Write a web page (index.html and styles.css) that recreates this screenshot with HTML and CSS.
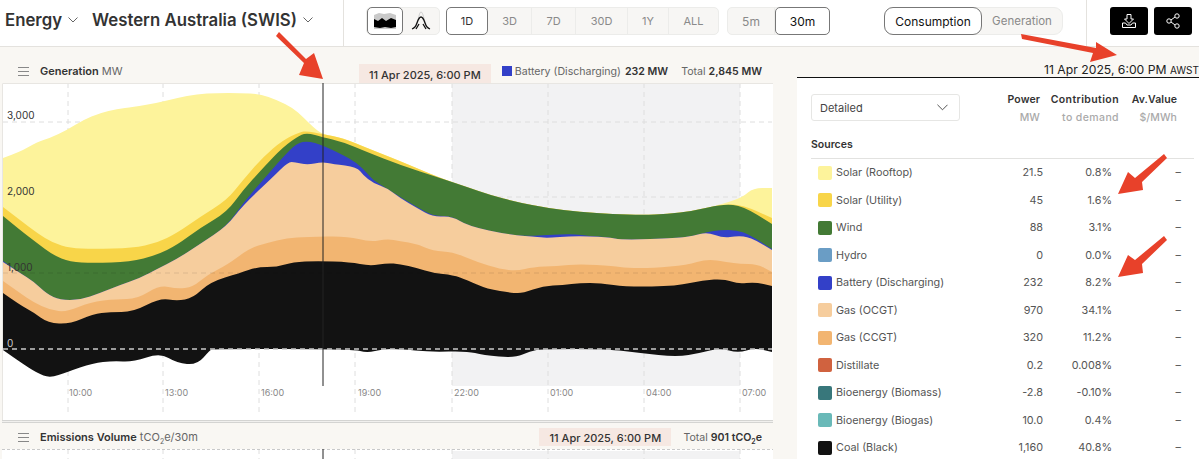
FILE: index.html
```html
<!DOCTYPE html>
<html lang="en">
<head>
<meta charset="utf-8">
<title>Energy - Western Australia (SWIS)</title>
<link rel="stylesheet" href="styles.css">
</head>
<body>
<header class="topbar">
  <div class="region">
    <span class="title t-energy">Energy</span>
    <svg class="chev c-energy" viewBox="0 0 10 6"><path d="M.5.5 5 5 9.500.5"/></svg>
    <span class="title t-region">Western Australia (SWIS)</span>
    <svg class="chev" viewBox="0 0 10 6"><path d="M.5.5 5 5 9.500.5"/></svg>
  </div>
  <div class="controls">
    <div class="group g-view">
      <button class="btn b-view active"><svg width="22" height="16" viewBox="0 0 22 16"><path fill="#c9c9c9" d="M0 2 5 0l5 1 6-1 6 2v14H0z"/><path fill="#000" d="M0 6l4 2 4-3 4 3 5-3 5 2v7l-5 1-6-1-5 1-6-1z"/></svg></button>
      <button class="btn b-view"><svg width="20" height="20" viewBox="0 0 20 20" fill="none"><path stroke="#ccc" d="M5 13C8 9 8 1 10 1s3 8 5 12"/><path stroke="#111" stroke-width="1.300" d="M1 18c3-1 4-3 5-6 1-3 2-6 4-6s3 3 4 6c1 3 2 5 5 6M5 18l3-5M15 18l-3-5"/></svg></button>
    </div>
    <div class="group g-range">
      <button class="btn b-1d active">1D</button>
      <button class="btn b-3d">3D</button>
      <button class="btn b-7d">7D</button>
      <button class="btn b-30d">30D</button>
      <button class="btn b-1y">1Y</button>
      <button class="btn b-all">ALL</button>
    </div>
    <div class="group g-int">
      <button class="btn b-5m">5m</button>
      <button class="btn b-30m active dark">30m</button>
    </div>
  </div>
  <div class="group g-mode">
    <button class="btn b-cons active dark">Consumption</button>
    <button class="btn b-gen">Generation</button>
  </div>
  <div class="actions">
    <button class="act"><svg width="16" height="16" viewBox="0 0 16 16" fill="none" stroke="#fff" stroke-width="1"><path d="M6 1.500h4V6h2.500L8 10.500 3.500 6H6zM1.500 10v4.500h13V10M1.500 10h3l1.500 2h4l1.500-2h3"/></svg></button>
    <button class="act"><svg width="14" height="16" viewBox="0 0 14 16" fill="none" stroke="#fff" stroke-width="1"><circle cx="3" cy="8" r="2.200"/><circle cx="11" cy="3" r="2.200"/><circle cx="11" cy="13" r="2.200"/><path d="M5 7l4-3M5 9l4 3"/></svg></button>
  </div>
</header>

<main class="content">
  <section class="charts">
    <div class="chart-head h-gen">
      <svg class="menu" width="11" height="9" viewBox="0 0 11 9"><path d="M0 .5h11M0 4.500h11M0 8.500h11"/></svg>
      <span class="ch-title"><b>Generation</b> MW</span>
      <span class="date-chip">11 Apr 2025, 6:00 PM</span>
      <span class="legend"><i class="sw-small"></i>Battery (Discharging) <b>232 MW</b></span>
      <span class="total">Total <b>2,845 MW</b></span>
    </div>
    <svg class="plot" width="771" height="337" viewBox="2 83 771 337">
      <rect x="2" y="83" width="771" height="337" fill="#fff"/>
      <rect x="452" y="83" width="288" height="303" fill="#f2f2f3"/>
      <g class="grid">
        <path d="M68 83V415M163 83V415M259 83V415M355 83V415M452 83V415M548 83V415M644 83V415M740 83V415"/>
        <path d="M3 122H772M3 197H772M3 273H772"/>
      </g>
      <path class="frame" d="M2.500 420V83.500H773"/>
      <path class="area" fill="#fdf39b" d="M3 158 20 152 37 142 50 138 67 130 83 120 100 113 117 109 133 107 157 103 177 98 197 94 217 93 240 93 260 94 277 100 293 108 303 117 313 127 322 134 343 138 367 148 400 161 440 178 467 187 490 195 517 202 547 208 580 212 613 214 643 215 667 214 693 211 723 204 743 197 753 188 772 188V349H3Z"/>
      <path class="area" fill="#f8d549" d="M3 207 20 220 37 233 53 243 70 248 93 249 133 248 157 243 177 233 200 217 227 200 243 180 263 157 283 140 300 132 307 131 322 134 343 138 367 148 400 161 440 178 467 187 490 195 517 202 547 208 580 212 613 214 643 215 667 214 693 211 723 204 743 205 772 218V349H3Z"/>
      <path class="area" fill="#437a35" d="M3 216 20 230 37 243 53 255 70 262 93 263 130 262 157 255 177 245 200 228 227 212 243 190 263 168 283 147 300 135 308 133 322 137 343 142 367 152 400 165 440 178 467 187 490 195 517 202 547 208 580 212 613 214 643 215 667 214 693 211 723 204 743 206 772 224V349H3Z"/>
      <path class="area" fill="#3340c8" d="M3 261 20 273 33 281 47 294 60 300 80 300 100 293 120 285 140 278 157 269 177 259 200 244 227 226 243 203 263 180 283 157 297 143 308 141 322 145 343 155 357 163 367 173 373 180 383 186 400 197 417 207 433 216 452 216 468 226 510 235 530 236 547 235 573 234 590 236 607 237 623 240 677 238 693 236 707 232 720 230 737 230 750 235 772 249V349H3Z"/>
      <path class="area" fill="#f6cd9d" d="M3 262 20 273 33 281 47 294 60 300 80 300 100 293 120 285 140 278 157 269 177 259 200 244 227 226 243 205 273 177 288 162 295 162 307 165 322 162 333 164 357 167 363 175 373 183 387 188 400 198 417 208 433 217 452 216 468 226 510 235 540 237 547 238 573 236 607 237 623 240 677 238 693 236 707 232 723 238 737 236 750 237 772 250V349H3Z"/>
      <path class="area" fill="#f2b571" d="M3 281 20 293 33 302 50 310 67 312 90 302 117 299 137 299 160 285 177 289 193 287 207 275 227 265 250 248 267 243 287 238 307 237 347 236 370 242 387 239 400 241 417 244 433 251 453 252 477 262 500 269 517 271 533 267 557 266 580 264 613 266 627 268 653 268 687 265 707 259 727 262 740 264 757 264 772 272V349H3Z"/>
      <path class="area" fill="#121212" d="M3 293 20 305 33 312 48 323 70 324 93 314 110 312 133 312 160 298 177 301 193 298 210 282 240 273 257 267 277 267 293 262 317 261 350 262 370 266 387 263 400 264 417 268 433 273 453 275 467 280 487 289 513 293 523 293 543 286 563 285 580 283 600 283 627 287 677 286 703 280 725 279 738 284 755 282 772 286V349H3Z"/>
      <path class="area" fill="#121212" d="M3 350 20 362 37 373 50 378 67 372 93 363 113 361 133 362 160 353 177 363 197 365 210 350 213 349 353 349 367 353 383 349 400 349 430 352 467 351 483 355 515 358 530 351 543 349 607 349 640 353 677 357 700 353 720 348 738 353 755 348 772 352V349H3Z"/>
      <g class="grid-over">
        <path class="faint" d="M3 273H772"/>
        <path class="zero" d="M3 349H772"/>
      </g>
      <path class="cursor" d="M323 83V386"/>
      <g class="y-labels">
        <text x="7" y="119">3,000</text>
        <text x="7" y="195">2,000</text>
        <text x="7" y="271">1,000</text>
        <text class="light" x="7" y="347">0</text>
      </g>
      <g class="x-labels">
        <text x="69" y="396">10:00</text>
        <text x="165" y="396">13:00</text>
        <text x="261" y="396">16:00</text>
        <text x="358" y="396">19:00</text>
        <text x="454" y="396">22:00</text>
        <text x="550" y="396">01:00</text>
        <text x="646" y="396">04:00</text>
        <text x="742" y="396">07:00</text>
      </g>
    </svg>
    <div class="rule"></div>
    <div class="chart-head h-em">
      <svg class="menu" width="11" height="9" viewBox="0 0 11 9"><path d="M0 .5h11M0 4.500h11M0 8.500h11"/></svg>
      <span class="ch-title"><b>Emissions Volume</b> tCO<sub>2</sub>e/30m</span>
      <span class="date-chip">11 Apr 2025, 6:00 PM</span>
      <span class="total">Total <b>901 tCO<sub>2</sub>e</b></span>
    </div>
    <svg class="plot plot-2" width="771" height="10" viewBox="2 449 771 10">
      <rect x="2" y="449" width="771" height="10" fill="#fff"/>
      <rect x="452" y="451" width="288" height="8" fill="#f2f2f3"/>
      <g class="grid">
        <path d="M68 449V459M163 449V459M259 449V459M355 449V459M452 449V459M548 449V459M644 449V459M740 449V459"/>
      </g>
      <path class="top-dash" d="M2 449.500H773"/>
      <path class="cursor" d="M323 449V459"/>
    </svg>
  </section>

  <aside class="panel">
    <div class="stamp">11 Apr 2025, 6:00 PM <small>AWST</small></div>
    <div class="panel-body">
      <div class="panel-top">
        <div class="select">Detailed
          <svg class="sel-chev" viewBox="0 0 12 7"><path d="M.5.500 6 6 11.500.5"/></svg>
        </div>
        <div class="col c-power"><b>Power</b><span>MW</span></div>
        <div class="col c-contrib"><b>Contribution</b><span>to demand</span></div>
        <div class="col c-val"><b>Av.Value</b><span>$/MWh</span></div>
      </div>
      <div class="sources">Sources</div>
      <ul class="rows">
        <li class="row"><i class="sw s-rooftop"></i><span>Solar (Rooftop)</span><span>21.5</span><span>0.8%</span><span>–</span></li>
        <li class="row"><i class="sw s-utility"></i><span>Solar (Utility)</span><span>45</span><span>1.6%</span><span>–</span></li>
        <li class="row"><i class="sw s-wind"></i><span>Wind</span><span>88</span><span>3.1%</span><span>–</span></li>
        <li class="row"><i class="sw s-hydro"></i><span>Hydro</span><span>0</span><span>0.0%</span><span>–</span></li>
        <li class="row"><i class="sw s-battery"></i><span>Battery (Discharging)</span><span>232</span><span>8.2%</span><span>–</span></li>
        <li class="row"><i class="sw s-ocgt"></i><span>Gas (OCGT)</span><span>970</span><span>34.1%</span><span>–</span></li>
        <li class="row"><i class="sw s-ccgt"></i><span>Gas (CCGT)</span><span>320</span><span>11.2%</span><span>–</span></li>
        <li class="row"><i class="sw s-dist"></i><span>Distillate</span><span>0.2</span><span>0.008%</span><span>–</span></li>
        <li class="row"><i class="sw s-biomass"></i><span>Bioenergy (Biomass)</span><span>-2.8</span><span>-0.10%</span><span>–</span></li>
        <li class="row"><i class="sw s-biogas"></i><span>Bioenergy (Biogas)</span><span>10.0</span><span>0.4%</span><span>–</span></li>
        <li class="row"><i class="sw s-coal"></i><span>Coal (Black)</span><span>1,160</span><span>40.8%</span><span>–</span></li>
      </ul>
    </div>
  </aside>
</main>

<svg class="arrows" width="1199" height="459" viewBox="0 0 1199 459">
  <path d="M276 36 279 32 306 59 314 53 323 79 299 75 304 63Z"/>
  <path d="M1021 34 1022 39 1093 53 1090 62 1117 55 1096 42 1096 48Z"/>
  <path d="M1164 154 1167 158 1142 182 1143 190 1118 194 1128 172 1135 178Z"/>
  <path d="M1164 236 1167 240 1142 264 1143 273 1118 277 1128 255 1135 260Z"/>
</svg>
<script src="chart.js"></script>
</body>
</html>
```

FILE: styles.css
```css
* { box-sizing: border-box; }
html, body { margin: 0; padding: 0; }
body {
  width: 1199px;
  height: 459px;
  overflow: hidden;
  position: relative;
  background: #f9f7f3;
  color: #333;
  font-family: "Inter", "Liberation Sans", sans-serif;
}
button { font: inherit; padding: 0; margin: 0; cursor: pointer; }

.topbar {
  height: 47px;
  background: #fff;
  border-bottom: 1px solid #e4e2de;
  display: flex;
  align-items: flex-start;
}
.region {
  width: 344px;
  height: 46px;
  padding: 0 0 6px 5px;
  display: flex;
  align-items: center;
  border-right: 1px solid #e4e2de;
}
.title { font-size: 16.800px; font-weight: 600; color: #333; white-space: nowrap; }
.chev { width: 10px; height: 6px; margin-left: 6px; fill: none; stroke: #666; stroke-width: 1; }
.c-energy { margin-right: 14px; }

.controls { display: flex; gap: 6px; margin: 7px 0 0 22px; }
.group {
  display: flex;
  height: 28px;
  background: #f7f6f4;
  border: 1px solid #ececea;
  border-radius: 5px;
}
.btn {
  height: 28px;
  margin-top: -1px;
  border: 0;
  border-right: 1px solid #ececea;
  background: transparent;
  color: #8a8a8a;
  font-size: 11px;
  display: flex;
  align-items: center;
  justify-content: center;
}
.btn:last-child { border-right: 0; }
.btn.active {
  background: #fff;
  color: #333;
  border: 1px solid #777;
  border-radius: 5px;
}
.btn.dark { color: #111; font-size: 12px; }
.b-view { width: 36px; }
.b-1d { width: 42px; margin-left: -1px; }
.b-3d { width: 44px; }
.b-7d { width: 44px; }
.b-30d { width: 52px; }
.b-1y { width: 41px; }
.b-all { width: 49px; }
.g-int { margin-left: 2px; }
.b-5m { width: 47px; font-size: 12px; }
.b-30m { width: 55px; margin-right: -1px; }
.g-mode { margin: 7px 0 0 54px; background: #f7f6f4; border-radius: 9px; width: 179px; }
.b-cons { width: 98px; margin-left: -1px; border-radius: 9px !important; }
.b-gen { width: 80px; font-size: 11.500px; }
.actions {
  display: flex;
  gap: 6px;
  height: 46px;
  margin-left: 23px;
  padding: 7px 0 0 23px;
  border-left: 1px solid #e4e2de;
}
.act {
  width: 38px;
  height: 28px;
  background: #000;
  border: 0;
  border-radius: 3px;
  display: flex;
  align-items: center;
  justify-content: center;
}

.content { display: flex; height: 412px; }
.charts { width: 797px; padding-left: 2px; flex: none; }
.chart-head {
  width: 771px;
  display: flex;
  align-items: center;
  font-size: 10.600px;
  color: #666;
  white-space: nowrap;
}
.h-gen { height: 36px; padding: 12px 11px 0 16px; }
.h-em { height: 26px; padding: 2px 11px 0 16px; }
.menu { fill: none; stroke: #888; stroke-width: 1; flex: none; }
.ch-title { margin-left: 11px; font-size: 11px; }
.ch-title b { font-weight: 600; color: #333; }
.date-chip {
  margin-left: auto;
  background: #f6e8e2;
  color: #333;
  font-weight: 500;
  font-size: 11px;
  height: 19px;
  display: flex;
  align-items: center;
  justify-content: center;
  width: 132px;
}
.h-gen .date-chip { align-self: flex-end; padding-top: 2px; }
.h-em .date-chip { align-self: center; height: 18px; padding-top: 2px; }
.legend { display: flex; align-items: center; gap: 3px; margin-left: 11px; }
.sw-small { width: 10px; height: 10px; background: #3340c8; display: block; }
.legend b, .total b { font-weight: 600; color: #333; }
.legend b { margin-left: 1px; }
.total { margin-left: 13px; }
.h-em .total { margin-left: 12px; }
sub { font-size: 7px; line-height: 0; }

.plot { display: block; }
.frame { fill: none; stroke: #e8e6e2; stroke-width: 1; }
.grid path { fill: none; stroke: #dedede; stroke-width: 1; stroke-dasharray: 5 4; }
.grid-over .faint { fill: none; stroke: #000; stroke-opacity: .1; stroke-dasharray: 5 4; }
.grid-over .zero { fill: none; stroke: #c9c9c9; stroke-width: 1.500; stroke-dasharray: 5 4; }
.cursor { fill: none; stroke: #222; stroke-width: 1; }
.top-dash { fill: none; stroke: #c9c9c9; stroke-dasharray: 3 2; }
.y-labels text { font-size: 10px; fill: #333; }
.y-labels .light { fill: #ccc; }
.x-labels text { font-size: 9px; fill: #888; }
.rule {
  width: 771px;
  height: 3px;
  border-top: 1px solid #d4d4d2;
  border-bottom: 1px solid #d4d4d2;
  background: #f1f0ee;
}

.panel { flex: 1; display: flex; flex-direction: column; min-width: 0; }
.stamp {
  height: 33px;
  padding-top: 15px;
  text-align: right;
  white-space: nowrap;
  font-size: 12.200px;
  color: #222;
}
.stamp small { font-size: 10px; }
.panel-body {
  flex: 1;
  background: #fff;
  border-top: 1px solid #111;
  padding: 16px 5px 0 14px;
}
.panel-top { display: flex; height: 37px; }
.select {
  width: 149px;
  height: 27px;
  padding: 0 8px;
  display: flex;
  align-items: center;
  justify-content: space-between;
  border: 1px solid #e6e6e4;
  border-radius: 3px;
  font-size: 11px;
  color: #444;
}
.sel-chev { width: 11px; height: 7px; fill: none; stroke: #444; stroke-width: 1; margin-right: 3px; }
.col {
  display: flex;
  flex-direction: column;
  align-items: flex-end;
  gap: 5px;
  margin-top: -1px;
  font-size: 10.500px;
  letter-spacing: .1px;
}
.col b { font-weight: 600; color: #333; }
.col span { color: #aaa; font-weight: 500; }
.c-power { width: 80px; }
.c-contrib { width: 79px; letter-spacing: .4px; }
.c-val { width: 58px; }
.sources {
  font-size: 10.500px;
  font-weight: 600;
  color: #333;
  height: 28px;
  padding-top: 7px;
  border-bottom: 1px solid #e2e2e0;
}
.rows { list-style: none; margin: 0; padding: 0 13px 0 7px; }
.row {
  display: grid;
  grid-template-columns: 14px 1fr 70px 65px 65px;
  column-gap: 4px;
  height: 27.500px;
  align-items: center;
  font-size: 10.800px;
  color: #555;
}
.row span:nth-child(n+3) { text-align: right; }
.sw { width: 14px; height: 14px; border-radius: 2px; display: block; }
.s-rooftop { background: #fdf39b; }
.s-utility { background: #f8d549; }
.s-wind { background: #437a35; }
.s-hydro { background: #6a9dc5; }
.s-battery { background: #3340c8; }
.s-ocgt { background: #f6cd9d; }
.s-ccgt { background: #f2b571; }
.s-dist { background: #d0623f; }
.s-biomass { background: #38777b; }
.s-biogas { background: #69b9b8; }
.s-coal { background: #121212; }

.arrows { position: absolute; left: 0; top: 0; pointer-events: none; }
.arrows path { fill: #e8412a; }
```

FILE: chart.js
```js
// Smooths the sampled top edge of each stacked area into quadratic curves.
document.querySelectorAll('.area').forEach(function (el) {
  var m = el.getAttribute('d').match(/^M([\d\s.]+)(V.*)$/);
  if (!m) return;
  var n = m[1].trim().split(/\s+/).map(Number);
  var pts = [];
  for (var i = 0; i < n.length; i += 2) pts.push([n[i], n[i + 1]]);
  var d = 'M' + pts[0][0] + ' ' + pts[0][1];
  for (var j = 1; j < pts.length - 1; j++) {
    var mx = (pts[j][0] + pts[j + 1][0]) / 2;
    var my = (pts[j][1] + pts[j + 1][1]) / 2;
    d += 'Q' + pts[j][0] + ' ' + pts[j][1] + ' ' + mx + ' ' + my;
  }
  var last = pts[pts.length - 1];
  el.setAttribute('d', d + 'L' + last[0] + ' ' + last[1] + m[2]);
});
```
